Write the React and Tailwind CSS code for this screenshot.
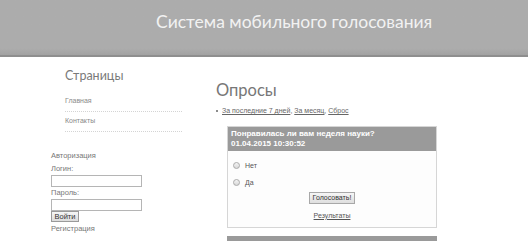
import React from 'react';

const Radio = ({ label }) => (
    <label className="flex items-center h-[8px] gap-[5px] text-[7px] leading-[8px] text-[#555]">
        <span className="w-[7px] h-[7px] rounded-full border border-[#aaa] bg-gradient-to-b from-[#f4f4f4] to-[#d8d8d8]"></span>
        {label}
    </label>
);

const App = () => {
    return (
        <div className="w-[528px] h-[241px] overflow-hidden bg-white font-['Liberation_Sans',sans-serif]">
            {/* Header */}
            <div className="h-[57px] border-b-2 border-[#8e8e8e] bg-gradient-to-b from-[#acacac] from-[88%] to-[#a2a2a2] flex">
                <h1 className="pl-[156px] pt-[9px] text-[17.5px] text-[#f2f2f2] leading-[26px] font-['Lato',sans-serif]">
                    Система мобильного голосования
                </h1>
            </div>

            <div className="flex">
                {/* Sidebar */}
                <div className="w-[216px] shrink-0">
                    <div className="pl-[65px] pt-[9px]">
                        <h2 className="text-[12.5px] text-[#7a7a7a] leading-[20px] font-['Lato',sans-serif]">Страницы</h2>
                        <ul className="mt-[7px] w-[117px] text-[7px] text-[#8a8a8a]">
                            <li className="h-[19px] pt-[3px] border-b border-dotted border-[#d4d4d4]">Главная</li>
                            <li className="h-[20px] pt-[4px] border-b border-dotted border-[#d4d4d4]">Контакты</li>
                        </ul>
                    </div>
                    <div className="pl-[51px] pt-[19px] text-[7.5px] text-[#777]">
                        <div className="leading-[10px]">Авторизация</div>
                        <div className="mt-[3px] leading-[10px]">Логин:</div>
                        <div className="mt-[1px] w-[91px] h-[12px] border border-[#b5b5b5] bg-white"></div>
                        <div className="mt-[1px] leading-[10px]">Пароль:</div>
                        <div className="mt-[1px] w-[91px] h-[12px] border border-[#b5b5b5] bg-white"></div>
                        <button className="w-[28px] h-[11px] border border-[#9a9a9a] bg-gradient-to-b from-[#f6f6f6] to-[#dcdcdc] text-[7.5px] text-[#333] leading-[9px]">Войти</button>
                        <div className="mt-[2px] leading-[10px]">Регистрация</div>
                    </div>
                </div>

                {/* Main */}
                <div className="flex-1 pt-[21px]">
                    <h2 className="text-[16.5px] text-[#777] leading-[24px] font-['Lato',sans-serif]">Опросы</h2>
                    <div className="mt-[4px] flex items-center gap-[4px] text-[7px] text-[#666]">
                        <span className="w-[2px] h-[2px] bg-[#666] rounded-full"></span>
                        <span>
                            <span className="underline">За последние 7 дней</span>, <span className="underline">За месяц</span>, <span className="underline">Сброс</span>
                        </span>
                    </div>

                    <div className="ml-[11px] mt-[9px] w-[210px] border border-[#d6d6d6]">
                        <div className="h-[24px] bg-[#9a9a9a] px-[3px] pt-[2px] text-[8px] font-bold text-white leading-[10px]">
                            <div>Понравилась ли вам неделя науки?</div>
                            <div>01.04.2015 10:30:52</div>
                        </div>
                        <div className="h-[76px] bg-[#fdfdfd] pl-[5px] pt-[11px]">
                            <Radio label="Нет" />
                            <div className="mt-[9px]"><Radio label="Да" /></div>
                            <div className="flex flex-col items-center pr-[5px]">
                                <button className="mt-[5px] h-[12px] px-[3px] border border-[#a8a8a8] bg-gradient-to-b from-[#f6f6f6] to-[#dedede] text-[7px] text-[#333] leading-[10px]">Голосовать!</button>
                                <span className="mt-[7px] text-[7px] leading-[9px] text-[#555] underline">Результаты</span>
                            </div>
                        </div>
                    </div>
                    <div className="ml-[11px] mt-[8px] w-[210px] h-[20px] bg-[#9a9a9a]"></div>
                </div>
            </div>
        </div>
    );
};

export default App;
